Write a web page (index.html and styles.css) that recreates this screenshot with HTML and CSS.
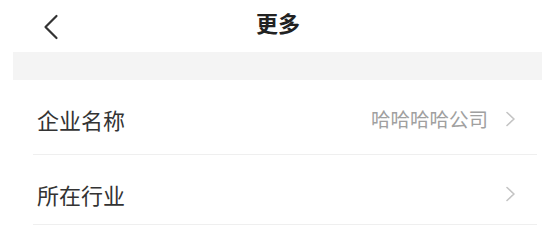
FILE: index.html
```html
<!DOCTYPE html>
<html lang="zh-CN">
<head>
<meta charset="utf-8">
<title>更多</title>
<link rel="stylesheet" href="styles.css">
</head>
<body>
<header class="nav">
  <div class="nav-left">
    <svg class="back" width="16" height="26" viewBox="0 0 16 26">
      <polyline points="13.5,2 2.5,13 13.5,24" fill="none" stroke="#333" stroke-width="2.2" stroke-linecap="round" stroke-linejoin="round"/>
    </svg>
  </div>
  <h1 class="title">更多</h1>
  <div class="nav-right"></div>
</header>
<div class="band"></div>
<ul class="list">
  <li class="row">
    <span class="label">企业名称</span>
    <span class="value">哈哈哈哈公司</span>
    <svg class="arrow" width="12" height="16" viewBox="0 0 12 16">
      <polyline points="2,1.5 9,8 2,14.5" fill="none" stroke="#c4c4c4" stroke-width="1.6" stroke-linecap="round" stroke-linejoin="round"/>
    </svg>
  </li>
  <li class="row row-last">
    <span class="label">所在行业</span>
    <span class="value"></span>
    <svg class="arrow" width="12" height="16" viewBox="0 0 12 16">
      <polyline points="2,1.5 9,8 2,14.5" fill="none" stroke="#c4c4c4" stroke-width="1.6" stroke-linecap="round" stroke-linejoin="round"/>
    </svg>
  </li>
</ul>
</body>
</html>
```

FILE: styles.css
```css
* { box-sizing: border-box; }
html, body {
  margin: 0;
  padding: 0;
  background: #ffffff;
  font-family: "Noto Sans CJK SC", "Noto Sans", sans-serif;
}
.nav {
  height: 52px;
  display: grid;
  grid-template-columns: 1fr auto 1fr;
  align-items: center;
}
.nav-left {
  padding-left: 43px;
  display: flex;
  align-items: center;
  padding-top: 2px;
}
.back { display: block; }
.title {
  margin: 0;
  padding-left: 6px;
  font-size: 22px;
  font-weight: 700;
  color: #222;
  line-height: 1;
  padding-bottom: 9px;
}
.band {
  height: 28px;
  margin: 0 8px 0 13px;
  background: #f4f4f4;
}
.list {
  list-style: none;
  margin: 0 13px 0 33px;
  padding: 0;
}
.row {
  height: 75px;
  display: flex;
  align-items: center;
  padding: 3px 20px 0 4px;
  border-bottom: 1px solid #efefef;
}
.row-last {
  height: 70px;
  padding-top: 8px;
}
.label {
  font-size: 22px;
  color: #333;
  line-height: 1;
}
.value {
  margin-left: auto;
  font-size: 19.5px;
  color: #a0a0a0;
  line-height: 1;
  margin-right: 17px;
}
.arrow { display: block; }
```
